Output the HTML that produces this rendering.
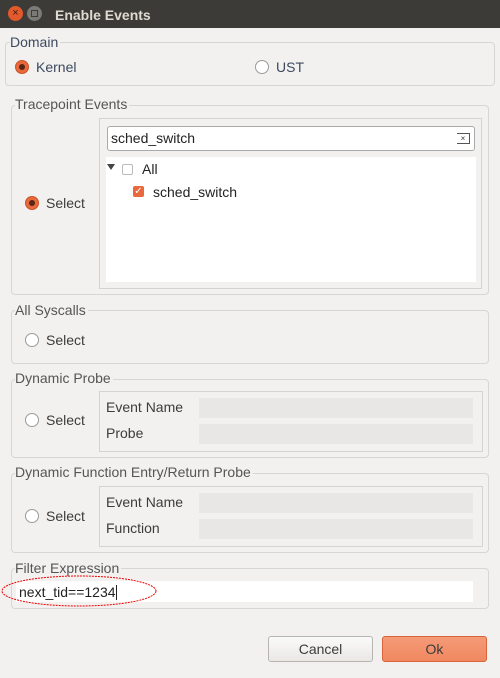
<!DOCTYPE html><html><head><style>
body{margin:0;width:500px;height:678px;background:#f2f1f0;font-family:"Liberation Sans",sans-serif;font-size:14px;color:#3c3c3c;position:relative;overflow:hidden}
.a{position:absolute}
.fr{position:absolute;border:1px solid #d8d6d3;border-radius:4px}
.lg{position:absolute;background:#f2f1f0;color:#555;padding-right:2px;line-height:16px;font-size:14px}
.rad{position:absolute;width:12px;height:12px;border:1px solid #9a9a9a;border-radius:50%;background:#fff}
.rad.on{background:#e9693c;border-color:#c85428}
.rad.on:after{content:"";position:absolute;left:3px;top:3px;width:6px;height:6px;border-radius:50%;background:#5a2515}
.t{position:absolute;line-height:16px}
.inbox{position:absolute;border:1px solid #d5d3d0}
.inp{position:absolute;background:#e8e7e6}
</style></head><body>
<div class="a" style="left:0;top:0;width:500px;height:28px;background:#3c3b37"></div>
<div class="a" style="left:8px;top:6px;width:15px;height:15px;border-radius:50%;background:#e25a2c;color:#3a2018;font-size:11px;line-height:15px;text-align:center">×</div>
<div class="a" style="left:27px;top:6px;width:15px;height:15px;border-radius:50%;background:#7b7a75"><div class="a" style="left:4px;top:4px;width:5px;height:5px;border:1px solid #3c3b37"></div></div>
<div class="t" style="left:55px;top:7px;color:#dfdbd2;font-weight:bold;font-size:14px">Enable Events</div>

<div class="fr" style="left:5px;top:42px;width:488px;height:42px"></div>
<div class="lg" style="left:10px;top:34px;color:#3d4a5e">Domain</div>
<div class="rad on" style="left:15px;top:60px"></div><div class="t" style="left:36px;top:59px;color:#3d4a5e">Kernel</div>
<div class="rad" style="left:255px;top:60px"></div><div class="t" style="left:276px;top:59px;color:#3d4a5e">UST</div>

<div class="fr" style="left:11px;top:105px;width:476px;height:188px"></div>
<div class="lg" style="left:15px;top:96px">Tracepoint Events</div>
<div class="rad on" style="left:25px;top:196px"></div><div class="t" style="left:46px;top:195px">Select</div>
<div class="inbox" style="left:99px;top:118px;width:381px;height:169px"></div>
<div class="a" style="left:107px;top:126px;width:366px;height:23px;background:#fff;border:1px solid #aaa;border-radius:3px"></div>
<div class="t" style="left:111px;top:130px;color:#222">sched_switch</div>
<div class="a" style="left:457px;top:133px;width:12px;height:9px;border:1px solid #555;border-left:none;font-size:8px;line-height:9px;text-align:center;color:#333">×</div>
<div class="a" style="left:106px;top:157px;width:370px;height:125px;background:#fff"></div>
<div class="a" style="left:107px;top:164px;width:0;height:0;border-left:4px solid transparent;border-right:4px solid transparent;border-top:6px solid #444"></div>
<div class="a" style="left:122px;top:164px;width:9px;height:9px;border:1px solid #bbb;border-radius:2px"></div>
<div class="t" style="left:142px;top:161px;color:#222">All</div>
<div class="a" style="left:133px;top:186px;width:11px;height:11px;background:#e9693c;border-radius:2px;color:#fff;font-size:10px;line-height:11px;text-align:center">✓</div>
<div class="t" style="left:153px;top:184px;color:#222">sched_switch</div>

<div class="fr" style="left:11px;top:310px;width:476px;height:52px"></div>
<div class="lg" style="left:15px;top:302px">All Syscalls</div>
<div class="rad" style="left:25px;top:333px"></div><div class="t" style="left:46px;top:332px">Select</div>

<div class="fr" style="left:11px;top:379px;width:476px;height:77px"></div>
<div class="lg" style="left:15px;top:370px">Dynamic Probe</div>
<div class="rad" style="left:25px;top:413px"></div><div class="t" style="left:46px;top:412px">Select</div>
<div class="inbox" style="left:99px;top:391px;width:382px;height:59px"></div>
<div class="t" style="left:106px;top:399px">Event Name</div><div class="inp" style="left:199px;top:398px;width:274px;height:20px"></div>
<div class="t" style="left:106px;top:425px">Probe</div><div class="inp" style="left:199px;top:424px;width:274px;height:20px"></div>

<div class="fr" style="left:11px;top:473px;width:476px;height:78px"></div>
<div class="lg" style="left:15px;top:464px">Dynamic Function Entry/Return Probe</div>
<div class="rad" style="left:25px;top:509px"></div><div class="t" style="left:46px;top:508px">Select</div>
<div class="inbox" style="left:99px;top:486px;width:382px;height:59px"></div>
<div class="t" style="left:106px;top:494px">Event Name</div><div class="inp" style="left:199px;top:493px;width:274px;height:20px"></div>
<div class="t" style="left:106px;top:520px">Function</div><div class="inp" style="left:199px;top:519px;width:274px;height:20px"></div>

<div class="fr" style="left:11px;top:568px;width:476px;height:39px"></div>
<div class="lg" style="left:15px;top:560px">Filter Expression</div>
<div class="a" style="left:16px;top:581px;width:457px;height:21px;background:#fff"></div>
<div class="t" style="left:19px;top:584px;color:#222">next_tid==1234<span style="display:inline-block;width:1px;height:15px;background:#222;vertical-align:-3px"></span></div>
<svg class="a" style="left:0;top:574px" width="160" height="34"><ellipse cx="79" cy="17" rx="77" ry="15" fill="none" stroke="#e00" stroke-width="1" stroke-dasharray="2,1"/></svg>

<div class="a" style="left:268px;top:636px;width:103px;height:24px;border:1px solid #b8b5b0;border-radius:3px;background:linear-gradient(#fafafa,#eae8e5);text-align:center;line-height:24px;color:#3c3c3c">Cancel</div>
<div class="a" style="left:382px;top:636px;width:103px;height:24px;border:1px solid #d8643c;border-radius:3px;background:linear-gradient(#f59a78,#f08860);text-align:center;line-height:24px;color:#3c3c3c">Ok</div>
</body></html>
